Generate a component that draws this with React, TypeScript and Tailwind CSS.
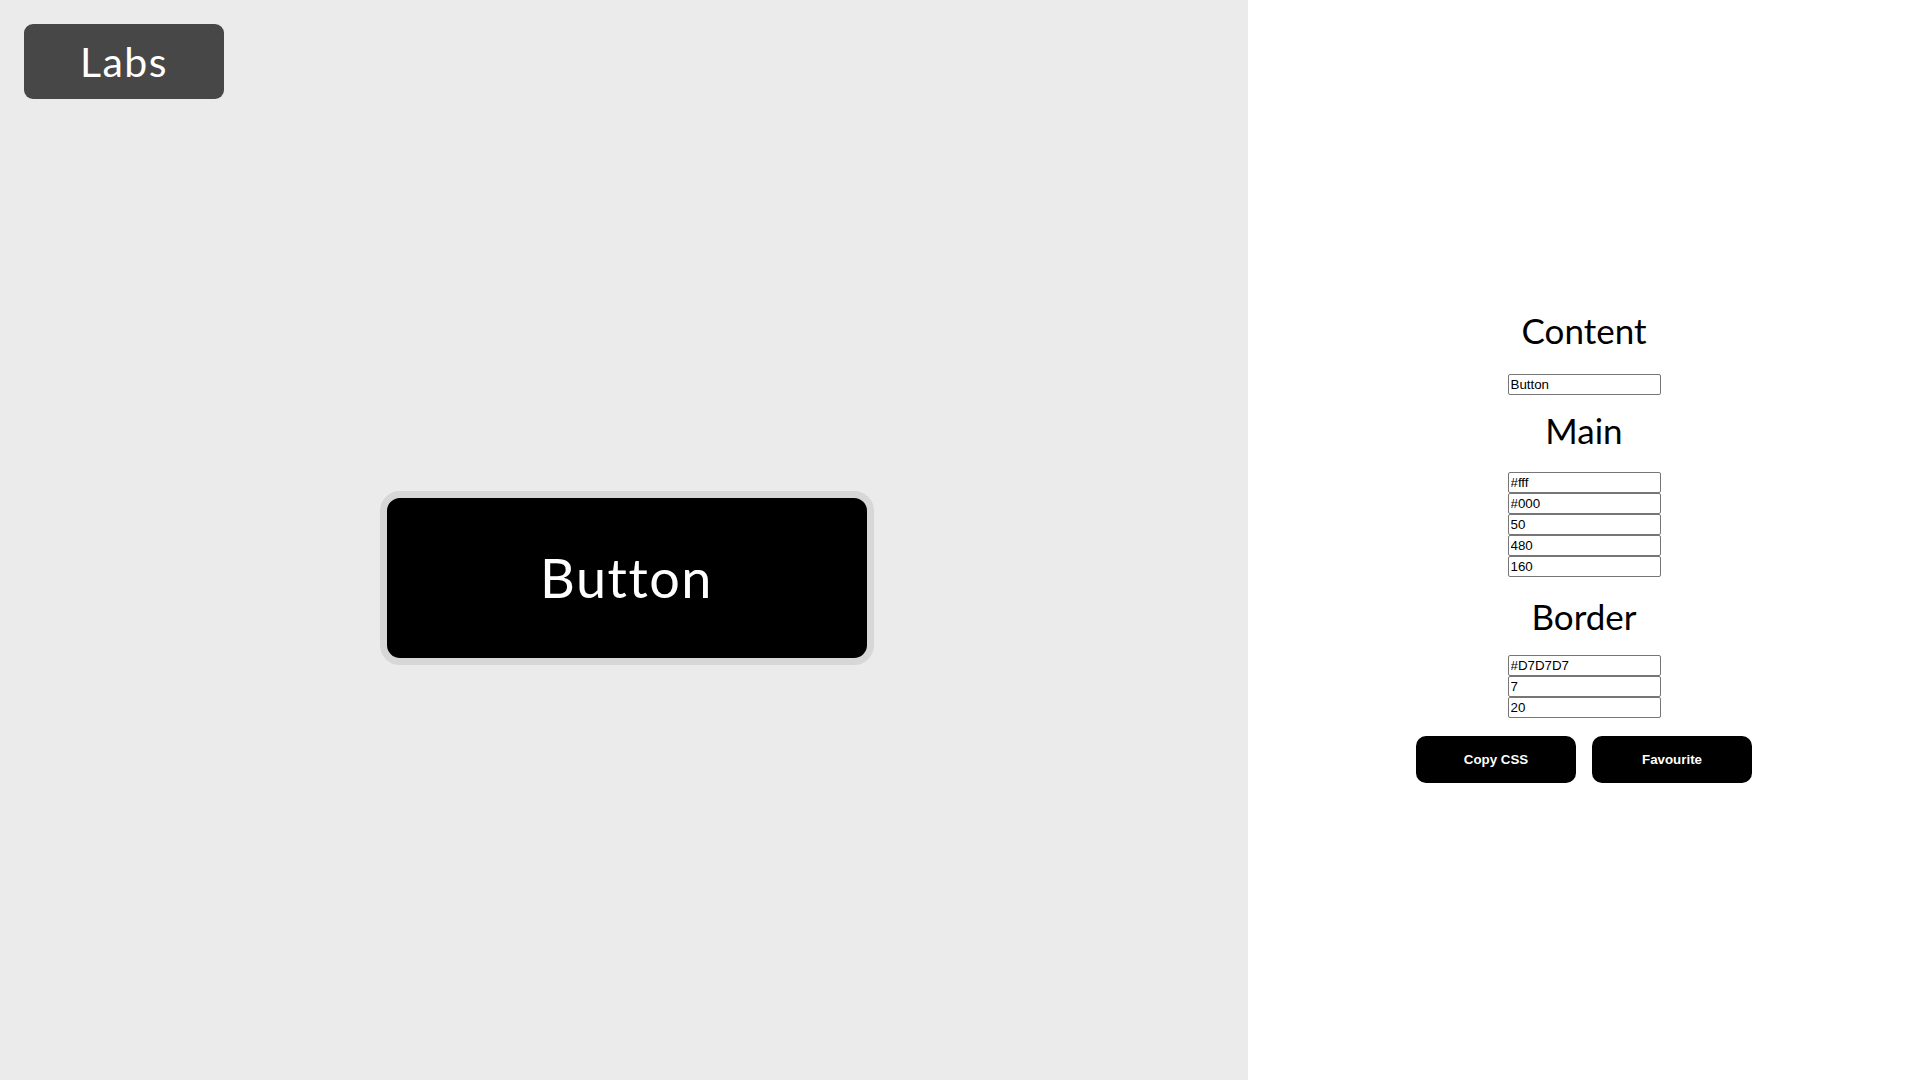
import React from "react";

const heading = "font-['Lato',sans-serif] text-[35px] leading-none text-black text-center";

function Field({ value }: { value: string }) {
  return (
    <input
      readOnly
      value={value}
      className="block w-[153px] h-[21px] border border-[#767676] rounded-[2px] pl-[2px] pr-[2px] font-['Liberation_Sans',Arial,sans-serif] text-[13.33px] text-black bg-white outline-none"
    />
  );
}

export default function App() {
  return (
    <div className="flex w-[1920px] h-[1080px] overflow-hidden">
      <div className="flex flex-col w-[1248px] h-full bg-[#ebebeb]">
        <div className="p-6">
          <div className="flex items-center justify-center w-[200px] h-[75px] rounded-[9px] bg-[#474747] text-white font-['Lato',sans-serif] text-[41px] tracking-[1.5px]">
            Labs
          </div>
        </div>
        <div className="flex flex-1 items-center justify-center pb-[48px] pl-[5px]">
          <div className="flex items-center justify-center w-[494px] h-[174px] border-[7px] border-[#D7D7D7] rounded-[20px] bg-black text-white font-['Lato',sans-serif] text-[54px] tracking-[1.5px]">
            Button
          </div>
        </div>
      </div>
      <div className="flex flex-col items-center w-[672px] h-full bg-white pt-[313px]">
        <div className={heading}>Content</div>
        <div className="mt-[26px]">
          <Field value="Button" />
        </div>
        <div className={heading + " mt-[18px]"}>Main</div>
        <div className="mt-[24px] flex flex-col">
          <Field value="#fff" />
          <Field value="#000" />
          <Field value="50" />
          <Field value="480" />
          <Field value="160" />
        </div>
        <div className={heading + " mt-[22px]"}>Border</div>
        <div className="mt-[21px] flex flex-col">
          <Field value="#D7D7D7" />
          <Field value="7" />
          <Field value="20" />
        </div>
        <div className="mt-[18px] flex gap-4">
          <button className="w-[160px] h-[47px] rounded-[10px] bg-black text-white font-['Liberation_Sans',Arial,sans-serif] font-bold text-[13.33px]">
            Copy CSS
          </button>
          <button className="w-[160px] h-[47px] rounded-[10px] bg-black text-white font-['Liberation_Sans',Arial,sans-serif] font-bold text-[13.33px]">
            Favourite
          </button>
        </div>
      </div>
    </div>
  );
}
